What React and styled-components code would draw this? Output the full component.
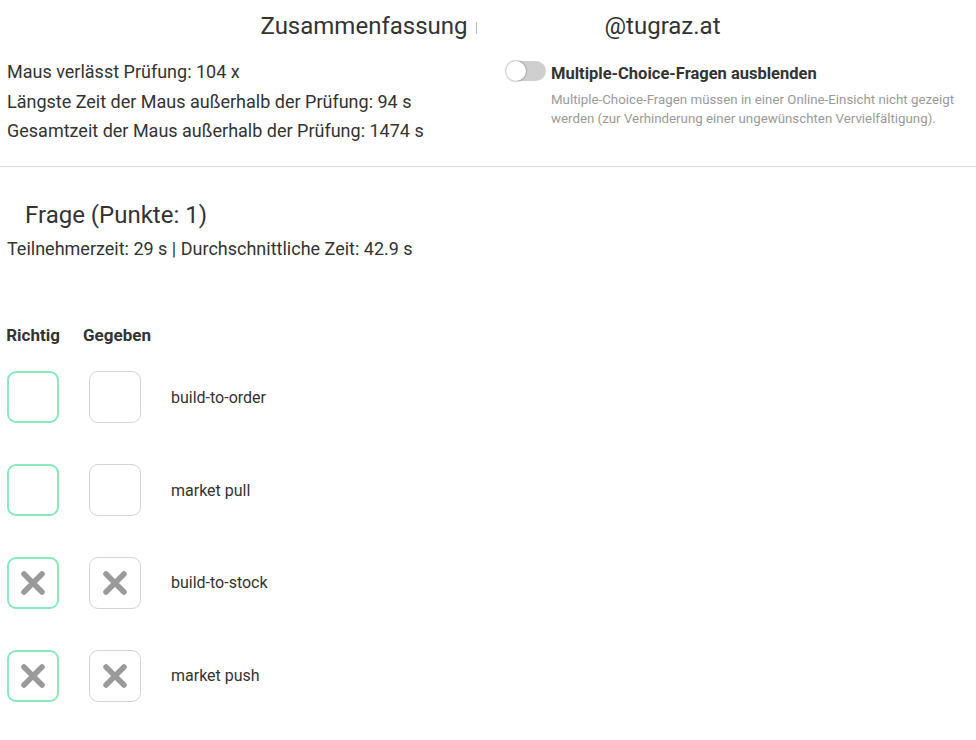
import React from "react"
import styled, { createGlobalStyle } from "styled-components"

const GlobalStyle = createGlobalStyle`
  body {
    margin: 0;
    background: #fff;
    font-family: Roboto, "Liberation Sans", Arial, sans-serif;
    color: #333;
  }
`

const answers = [
  { label: "build-to-order", correct: false, given: false },
  { label: "market pull", correct: false, given: false },
  { label: "build-to-stock", correct: true, given: true },
  { label: "market push", correct: true, given: true },
]

const Cross = () => (
  <svg width="28" height="28" viewBox="0 0 28 28">
    <path d="M5 5 L23 23 M23 5 L5 23" stroke="#9a9a9a" strokeWidth="5.5" strokeLinecap="round" />
  </svg>
)

const App = () => {
  return (
    <Page>
      <GlobalStyle />
      <Summary>
        <Title>
          Zusammenfassung
          <Redacted />
          <Mail>@tugraz.at</Mail>
        </Title>
        <SummaryBody>
          <Stats>
            <StatLine>Maus verlässt Prüfung: 104 x</StatLine>
            <StatLine>Längste Zeit der Maus außerhalb der Prüfung: 94 s</StatLine>
            <StatLine>Gesamtzeit der Maus außerhalb der Prüfung: 1474 s</StatLine>
          </Stats>
          <Option>
            <Toggle>
              <Knob />
            </Toggle>
            <OptionText>
              <OptionLabel>Multiple-Choice-Fragen ausblenden</OptionLabel>
              <OptionHint>
                Multiple-Choice-Fragen müssen in einer Online-Einsicht nicht gezeigt werden (zur
                Verhinderung einer ungewünschten Vervielfältigung).
              </OptionHint>
            </OptionText>
          </Option>
        </SummaryBody>
      </Summary>
      <Divider />
      <Question>
        <QuestionTitle>Frage (Punkte: 1)</QuestionTitle>
        <QuestionMeta>Teilnehmerzeit: 29 s | Durchschnittliche Zeit: 42.9 s</QuestionMeta>
        <AnswerGrid>
          <ColHead>Richtig</ColHead>
          <ColHead $left>Gegeben</ColHead>
          <span />
          {answers.map((a) => (
            <React.Fragment key={a.label}>
              <Box $correct>{a.correct && <Cross />}</Box>
              <Box>{a.given && <Cross />}</Box>
              <AnswerLabel>{a.label}</AnswerLabel>
            </React.Fragment>
          ))}
        </AnswerGrid>
      </Question>
    </Page>
  )
}

const Page = styled.div`
  width: 976px;
  min-height: 740px;
`

const Summary = styled.div`
  padding: 11px 7px 0;
`

const Title = styled.h2`
  margin: 0;
  font-size: 24px;
  font-weight: 400;
  line-height: 30px;
  color: #333;
  display: flex;
  justify-content: center;
  align-items: center;
  padding-left: 5px;
`

const Redacted = styled.span`
  display: inline-block;
  width: 1px;
  height: 12px;
  background: #bbb;
  margin: 4px 128px 0 8px;
`

const Mail = styled.span``

const SummaryBody = styled.div`
  display: flex;
  margin-top: 16px;
`

const Stats = styled.div`
  width: 499px;
  flex-shrink: 0;
`

const StatLine = styled.div`
  font-size: 18px;
  line-height: 29.5px;
`

const Option = styled.div`
  display: flex;
  align-items: flex-start;
  gap: 5px;
  padding-top: 5px;
`

const Toggle = styled.div`
  width: 40px;
  height: 20px;
  border-radius: 10px;
  background: #cfcfcf;
  position: relative;
  flex-shrink: 0;
  margin-top: -1px;
`

const Knob = styled.div`
  position: absolute;
  left: 0;
  top: 0;
  width: 20px;
  height: 20px;
  border-radius: 50%;
  background: #fff;
  box-shadow: 0 0 1px 1px rgba(0, 0, 0, 0.18);
`

const OptionText = styled.div`
  display: flex;
  flex-direction: column;
`

const OptionLabel = styled.div`
  font-size: 16.5px;
  font-weight: 700;
  color: #333;
  line-height: 20px;
  margin-top: 2px;
`

const OptionHint = styled.div`
  font-size: 13.3px;
  color: #9a9a9a;
  line-height: 19px;
  margin-top: 6px;
  width: 408px;
`

const Divider = styled.hr`
  border: none;
  border-top: 1px solid #ddd;
  margin: 20px 0 0;
`

const Question = styled.div`
  padding: 34px 7px 0;
`

const QuestionTitle = styled.h3`
  margin: 0 0 0 18px;
  font-size: 24px;
  font-weight: 400;
  line-height: 28px;
  color: #333;
`

const QuestionMeta = styled.div`
  font-size: 18px;
  line-height: 22px;
  margin-top: 9px;
`

const AnswerGrid = styled.div`
  display: grid;
  grid-template-columns: 52px 64px auto;
  column-gap: 24px;
  row-gap: 40.8px;
  align-items: center;
  justify-items: center;
  margin-top: 65px;
`

const ColHead = styled.div`
  font-size: 17px;
  font-weight: 700;
  line-height: 20px;
  margin-bottom: -14px;
  justify-self: ${(p) => (p.$left ? "start" : "center")};
  white-space: nowrap;
`

const Box = styled.div`
  width: 52px;
  height: 52px;
  box-sizing: border-box;
  border-radius: 9px;
  border: ${(p) => (p.$correct ? "2px solid #8ae9bb" : "1px solid #d4d4d4")};
  display: flex;
  align-items: center;
  justify-content: center;
`

const AnswerLabel = styled.div`
  justify-self: start;
  font-size: 16px;
`

export default App
